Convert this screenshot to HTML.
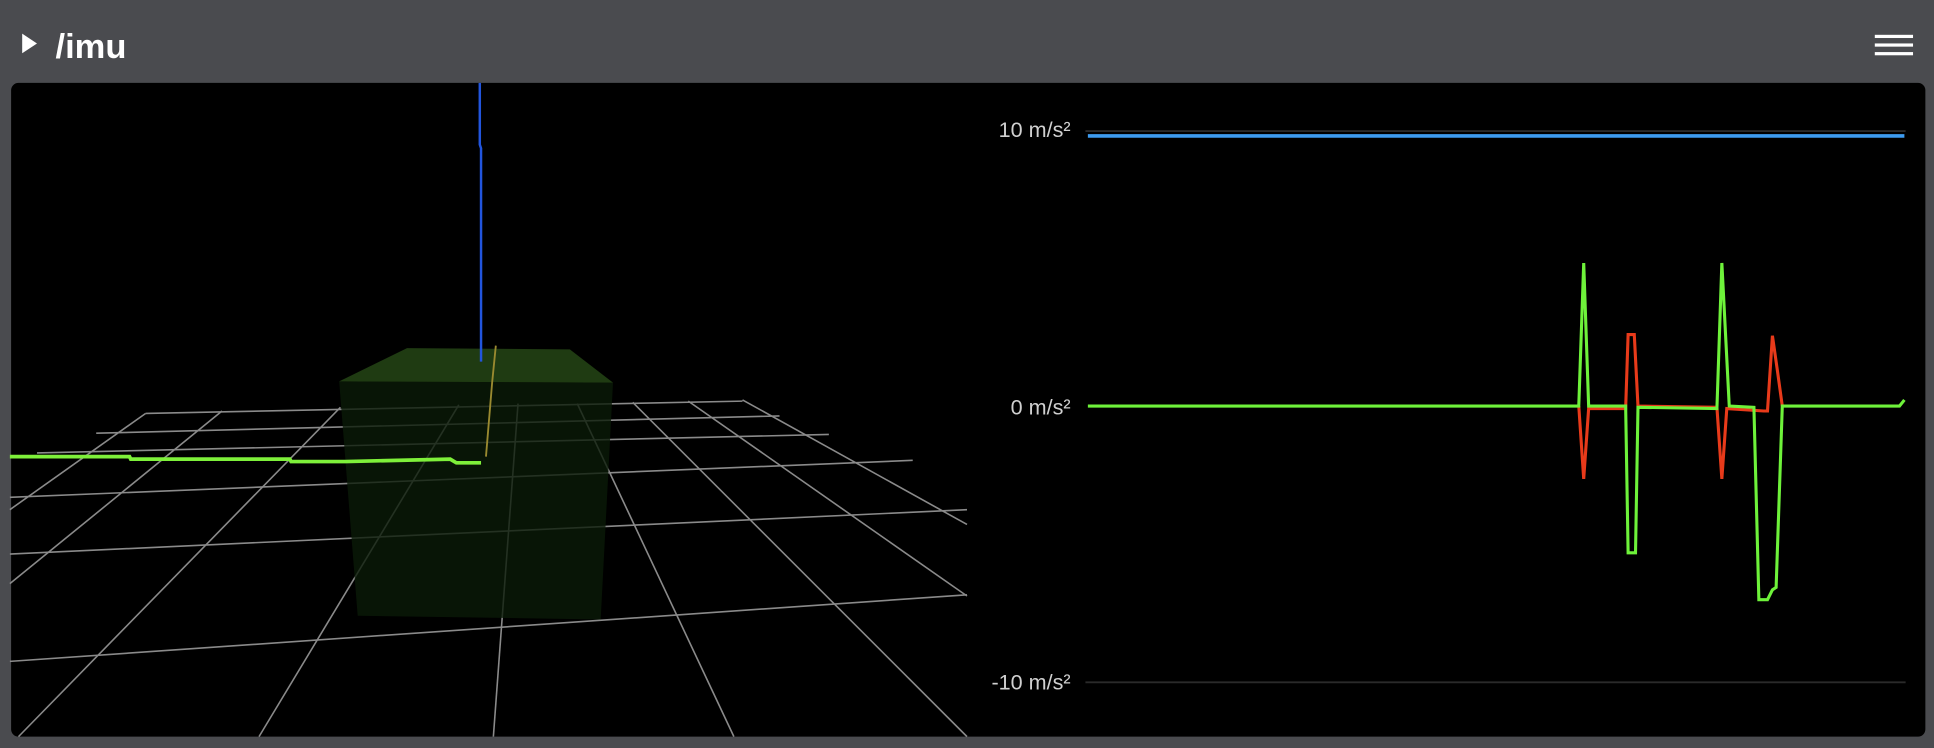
<!DOCTYPE html>
<html><head><meta charset="utf-8"><style>
html,body{margin:0;padding:0;background:#4a4b4f;width:1934px;height:748px;overflow:hidden}
svg{display:block}
</style></head><body>
<svg width="1934" height="748" viewBox="0 0 1568 606" xmlns="http://www.w3.org/2000/svg">
<rect x="0" y="0" width="1568" height="606" fill="#4a4b4f"/>
<polygon points="18,27 30,35 18,43" fill="#fff"/>
<text x="45" y="47" font-family="Liberation Sans, sans-serif" font-weight="bold" font-size="28" fill="#fff">/imu</text>
<rect x="1520" y="28" width="31" height="2.6" fill="#fff"/>
<rect x="1520" y="35" width="31" height="2.6" fill="#fff"/>
<rect x="1520" y="42" width="31" height="2.6" fill="#fff"/>
<rect x="9" y="67" width="1552" height="530" rx="6" fill="#000"/>
<g stroke="#8a8a8a" stroke-width="1.3" fill="none">
<polyline points="118,335 602,325"/>
<polyline points="78,351 632,337"/>
<polyline points="30,367 672,352"/>
<polyline points="8,403 740,373"/>
<polyline points="8,449 784,413"/>
<polyline points="8,536 784,482"/>
<polyline points="118,335 8,413"/>
<polyline points="180,333 8,473"/>
<polyline points="276,330 15,597"/>
<polyline points="372,328 210,597"/>
<polyline points="420,327 400,597"/>
<polyline points="468,327 595,597"/>
<polyline points="513,326 784,597"/>
<polyline points="558,325 784,483"/>
<polyline points="602,324 784,425"/>
</g>
<polygon points="275,309 497,310 487,502 290,499" fill="#0a1a08" fill-opacity="0.8"/>
<polygon points="330,282 462,283 497,310 275,309" fill="#1f3b12"/>
<polyline points="389,67 389,117 390,120 390,293" stroke="#2255dd" stroke-width="2" fill="none"/>
<polyline points="402,280 399,310 394,370" stroke="#9a8a30" stroke-width="1.5" fill="none"/>
<polyline points="8,370 105,370 106,372 235,372 236,374 280,374 365,372 370,375 390,375" stroke="#7ef03a" stroke-width="3" fill="none"/>
<g font-family="Liberation Sans, sans-serif" font-size="17.5" fill="#d0d0d0" text-anchor="end">
<text x="868" y="111">10 m/s²</text>
<text x="868" y="336">0 m/s²</text>
<text x="868" y="559">-10 m/s²</text>
</g>
<g stroke="#2a2a2a" stroke-width="1.5">
<line x1="880" y1="106" x2="1545" y2="106"/>
<line x1="880" y1="553" x2="1545" y2="553"/>
</g>
<line x1="882" y1="110" x2="1544" y2="110" stroke="#3d9bf0" stroke-width="3"/>
<polyline points="1280,329 1284,388 1288,331 1318,331 1320,271 1325,271 1328,329 1392,330 1396,388 1400,331 1430,333 1433,333 1437,272 1441,300 1445,329" stroke="#e83a1a" stroke-width="2.5" fill="none"/>
<polyline points="882,329 1280,329 1284,213 1288,329 1318,329 1320,448 1326,448 1328,330 1392,331 1396,213 1402,329 1422,330 1426,486 1433,486 1437,478 1440,476 1445,329 1540,329 1544,324" stroke="#6ef23a" stroke-width="2.5" fill="none"/>
</svg>
</body></html>
